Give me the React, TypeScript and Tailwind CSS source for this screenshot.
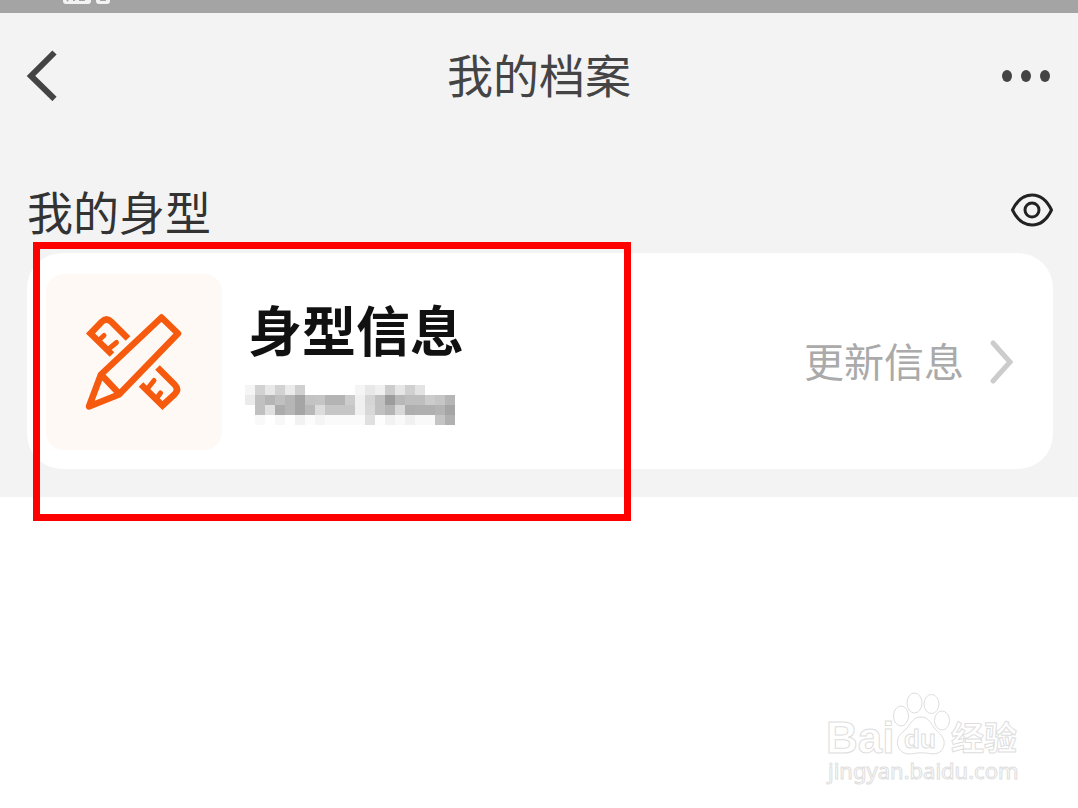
const MOSAIC: string[][] = [
  ['#f5f5f5', '#d2d2d2', '#e8e8e8', '#d2d2d2', '#ebebeb', '#d0d0d0', '#fff', '#fff', '#fff', '#fff', '#fff', '#f5f5f5', '#e8e8e8', '#f0f0f0', '#cccccc', '#e6e6e6', '#d0d0d0', '#e3e3e3', '#fff', '#fff', '#fff'],
  ['#ebebeb', '#c0c0c0', '#b5b5b5', '#c0c0c0', '#b6b6b6', '#a5a5a5', '#c3c3c3', '#c5c5c5', '#b4b4b4', '#b4b4b4', '#cccccc', '#f0f0f0', '#d5d5d5', '#c0c0c0', '#9c9c9c', '#b8b8b8', '#bebebe', '#bebebe', '#cccccc', '#c6c6c6', '#b6b6b6'],
  ['#fff', '#c0c0c0', '#e0e0e0', '#acacac', '#b6b6b6', '#a5a5a5', '#b8b8b8', '#dcdcdc', '#c6c6c6', '#c6c6c6', '#c6c6c6', '#f0f0f0', '#d8d8d8', '#c0c0c0', '#b4b4b4', '#d8d8d8', '#aeaeae', '#b0b0b0', '#b0b0b0', '#b4b4b4', '#a5a5a5'],
  ['#fff', '#f9f9f9', '#fff', '#f8f8f8', '#fff', '#f2f2f2', '#fcfcfc', '#f5f5f5', '#fafafa', '#fafafa', '#fafafa', '#fafafa', '#e0e0e0', '#fdfdfd', '#f2f2f2', '#f9f9f9', '#f1f1f1', '#f9f9f9', '#f9f9f9', '#c4c4c4', '#b0b0b0'],
];

function StatusBar() {
  return (
    <div className="h-[13px] bg-[#a4a4a4] pl-[62px]">
      <svg width="50" height="5" viewBox="0 0 50 5" className="block" aria-hidden="true">
        <path d="M1 0h28v1q0 3-3 3H4q-3 0-3-3zM34 0h14v1q0 3-3 3h-8q-3 0-3-3z" fill="#f3f3f3" />
        <path d="M6 0l-1 1M12 0v1M17 0h6M38 0h6" stroke="#a4a4a4" strokeWidth="2" />
      </svg>
    </div>
  );
}

function Header() {
  return (
    <header className="flex h-[124px] items-center justify-between px-[26px]">
      <button type="button" aria-label="返回" className="flex w-[50px]">
        <svg width="32" height="52" viewBox="0 0 32 52" fill="none" aria-hidden="true">
          <path d="M28.500 3.500L5 27L28.500 50" stroke="#444" strokeWidth="6" />
        </svg>
      </button>
      <h1 className="pb-1 text-[46px] leading-[60px] text-[#444]">我的档案</h1>
      <button type="button" aria-label="更多" className="flex w-[50px]">
        <svg width="50" height="14" viewBox="0 0 50 14" fill="#444" aria-hidden="true">
          <ellipse cx="5" cy="8" rx="5" ry="6" />
          <ellipse cx="24" cy="8" rx="5" ry="6" />
          <ellipse cx="43" cy="8" rx="5" ry="6" />
        </svg>
      </button>
    </header>
  );
}

function ToolsIcon() {
  return (
    <svg width="104" height="104" viewBox="82 310 104 104" fill="none" stroke="#f55a0f" strokeWidth="6.500" aria-hidden="true">
      <path d="M161.500 317.500L178 333.500L119 394.500L89 406.500L101 374.500Z" strokeLinejoin="round" />
      <path d="M102 375.500L119 393.500" />
      <path d="M128 338.500L111.500 322Q106.500 317 101.500 322L90.500 333.500L112 354.500" />
      <path d="M98 341L104 335.500M108 349.500L116.500 342.500" strokeWidth="5" strokeLinecap="round" />
      <path d="M157.500 367.500L174.500 384.500Q179.500 389.500 174.500 394.500L162.500 405.500L141 384.500" />
      <path d="M148 388L154 380.500M156.500 398.500L160.500 393" strokeWidth="5" strokeLinecap="round" />
    </svg>
  );
}

function ProfileCard() {
  return (
    <a href="#body-info" className="flex items-center rounded-[35px] bg-white pb-[19px] pl-[19px] pr-[38px] pt-[21px]">
      <span className="flex size-44 shrink-0 items-center justify-center rounded-[18px] bg-[#fff9f5]">
        <ToolsIcon />
      </span>
      <span className="ml-[23px] flex flex-1 flex-col gap-5 pb-[6px]">
        <span className="pl-[3px] text-[54px] font-bold leading-[72px] text-[#111]">身型信息</span>
        <svg width="210" height="40" viewBox="0 0 210 40" shapeRendering="crispEdges" aria-hidden="true">
          {MOSAIC.map((row, y) =>
            row.map((color, x) => (
              <rect key={`${x}-${y}`} x={x * 10} y={y * 10} width="10" height="10" fill={color} />
            )),
          )}
        </svg>
      </span>
      <span className="pb-1 text-[40px] leading-[52px] text-[#aaa]">更新信息</span>
      <svg width="26" height="46" viewBox="0 0 26 46" fill="none" className="ml-[25px]" aria-hidden="true">
        <path d="M4 4L21 23L4 42" stroke="#ccc" strokeWidth="5" strokeLinecap="round" />
      </svg>
    </a>
  );
}

function Watermark() {
  return (
    <svg width="204" height="100" viewBox="822 688 204 100" fill="#fff" stroke="#dedede" strokeWidth="1" role="img" aria-label="Baidu 经验">
      <text x="826" y="753" fontSize="44" fontWeight="bold" fontFamily="Liberation Sans, sans-serif">Bai</text>
      <ellipse cx="901" cy="716" rx="7.500" ry="10" />
      <ellipse cx="914.500" cy="703" rx="7.500" ry="10" />
      <ellipse cx="931.500" cy="704" rx="7.500" ry="9.500" />
      <ellipse cx="942" cy="720.500" rx="7.500" ry="9.500" />
      <path d="M921 717C912 717 911 725 905 730C899 735 896 739 898 746C900 753 907 755 914 753.500C919 752.500 924 752.500 929 753.500C937 755 943 752 944 745C945 738 941 735 936 730C931 725 930 717 921 717Z" />
      <text x="904" y="748" fontSize="26" fontWeight="bold" fontFamily="Liberation Sans, sans-serif">du</text>
      <text x="951" y="750" fontSize="33" fontWeight="bold" fontFamily="Noto Sans CJK SC, sans-serif">经验</text>
      <text x="828" y="779" fontSize="22" fontFamily="Noto Sans, sans-serif">jingyan.baidu.com</text>
    </svg>
  );
}

export default function App() {
  return (
    <div className="relative flex min-h-screen flex-col bg-white font-['Noto_Sans_CJK_SC',sans-serif]">
      <div className="bg-[#f3f3f3] pb-7">
        <StatusBar />
        <Header />
        <main className="pl-[27px] pr-[25px] pt-[43px]">
          <div className="mb-[13px] flex h-[60px] items-center justify-between">
            <h2 className="text-[46px] leading-[60px] text-[#333]">我的身型</h2>
            <button type="button" aria-label="显示或隐藏" className="flex">
              <svg width="44" height="36" viewBox="0 0 44 36" fill="none" stroke="#222" strokeWidth="3" aria-hidden="true">
                <path d="M3.500 18C13 -2 33 -2 42.500 18C33 38 13 38 3.500 18Z" strokeLinejoin="round" />
                <circle cx="23" cy="18" r="7" />
              </svg>
            </button>
          </div>
          <ProfileCard />
        </main>
      </div>
      <div className="pointer-events-none absolute left-[33px] top-[242px] h-[279px] w-[598px] border-[7px] border-[#f00]" />
      <footer className="mt-auto flex justify-end pb-5 pr-[52px]">
        <Watermark />
      </footer>
    </div>
  );
}
